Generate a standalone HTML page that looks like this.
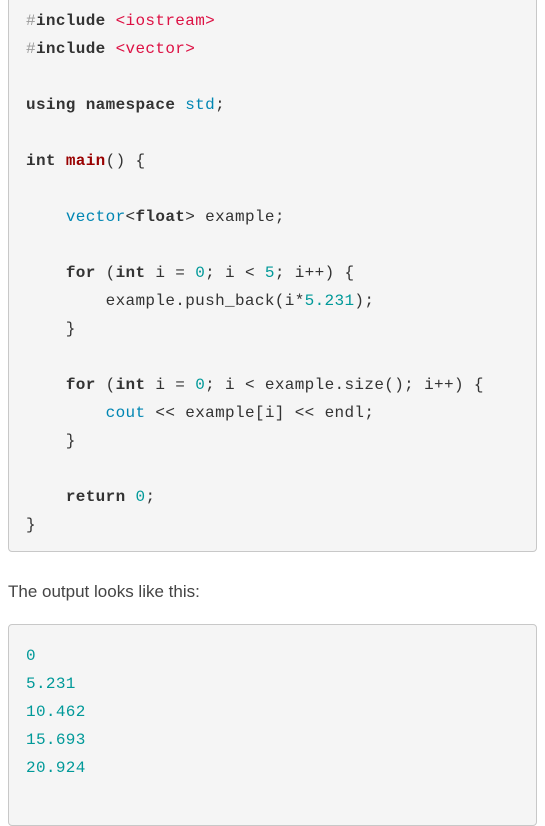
<!DOCTYPE html>
<html><head><style>
body{margin:0;background:#fff;width:545px;height:783px;overflow:hidden;position:relative;font-family:"Liberation Sans",sans-serif}
.box{position:absolute;left:8px;width:527px;background:#f5f5f5;border:1px solid #c8c8c8;border-radius:4px}
pre{margin:0;font-family:"Liberation Mono",monospace;font-size:16px;letter-spacing:0.35px;line-height:28px;color:#333;position:absolute;left:17px}
.k{font-weight:bold}.s{color:#d14}.t{color:#0086b3}.f{color:#900;font-weight:bold}.n{color:#099}.c{color:#999}
p{position:absolute;left:8px;top:582px;margin:0;font-size:17px;color:#444}
</style></head><body>
<div class="box" style="top:-10px;height:560px">
<pre style="top:16px"><span class="c">#</span><span class="k">include</span> <span class="s">&lt;iostream&gt;</span>
<span class="c">#</span><span class="k">include</span> <span class="s">&lt;vector&gt;</span>

<span class="k">using namespace</span> <span class="t">std</span>;

<span class="k">int</span> <span class="f">main</span>() {

    <span class="t">vector</span>&lt;<span class="k">float</span>&gt; example;

    <span class="k">for</span> (<span class="k">int</span> i = <span class="n">0</span>; i &lt; <span class="n">5</span>; i++) {
        example.push_back(i*<span class="n">5.231</span>);
    }

    <span class="k">for</span> (<span class="k">int</span> i = <span class="n">0</span>; i &lt; example.size(); i++) {
        <span class="t">cout</span> &lt;&lt; example[i] &lt;&lt; endl;
    }

    <span class="k">return</span> <span class="n">0</span>;
}</pre></div>
<p>The output looks like this:</p>
<div class="box" style="top:624px;height:200px">
<pre style="top:17px;color:#099">0
5.231
10.462
15.693
20.924</pre></div>
</body></html>
